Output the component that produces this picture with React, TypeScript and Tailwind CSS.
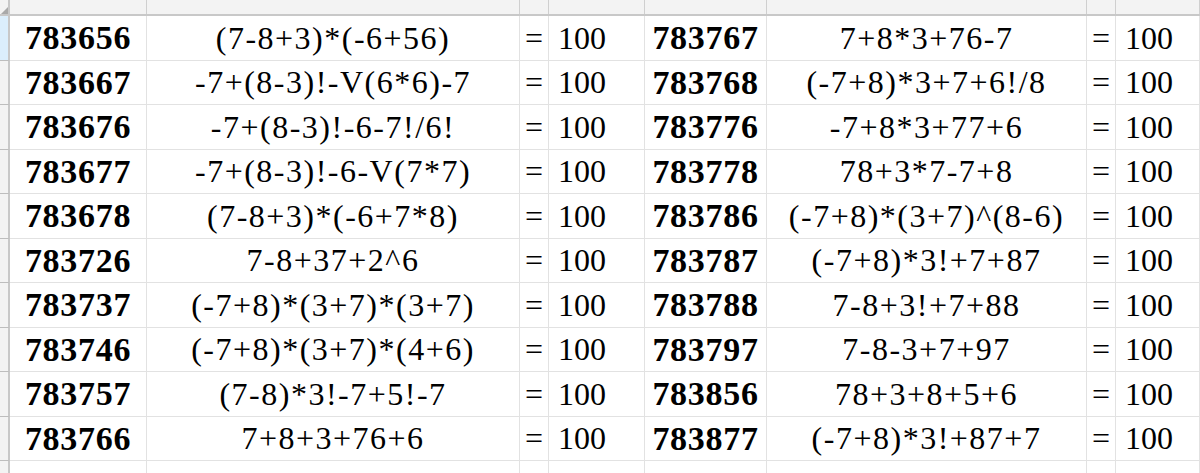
import React from "react";

const rows: [string, string, string, string][] = [
  ["783656", "(7-8+3)*(-6+56)", "783767", "7+8*3+76-7"],
  ["783667", "-7+(8-3)!-V(6*6)-7", "783768", "(-7+8)*3+7+6!/8"],
  ["783676", "-7+(8-3)!-6-7!/6!", "783776", "-7+8*3+77+6"],
  ["783677", "-7+(8-3)!-6-V(7*7)", "783778", "78+3*7-7+8"],
  ["783678", "(7-8+3)*(-6+7*8)", "783786", "(-7+8)*(3+7)^(8-6)"],
  ["783726", "7-8+37+2^6", "783787", "(-7+8)*3!+7+87"],
  ["783737", "(-7+8)*(3+7)*(3+7)", "783788", "7-8+3!+7+88"],
  ["783746", "(-7+8)*(3+7)*(4+6)", "783797", "7-8-3+7+97"],
  ["783757", "(7-8)*3!-7+5!-7", "783856", "78+3+8+5+6"],
  ["783766", "7+8+3+76+6", "783877", "(-7+8)*3!+87+7"],
];

const cols = "grid grid-cols-[10px_137px_373px_29px_96px_122px_320px_29px_1fr]";
const cell = "border-r border-b border-[#e2e2e2] flex items-center h-[44.5px] overflow-hidden whitespace-nowrap";
const bold = "font-bold text-[34px] tracking-[0.7px] justify-center";
const reg = "text-[32px] tracking-[1.5px] justify-center";

export default function App() {
  return (
    <div
      className="w-[1200px] h-[473px] overflow-hidden bg-white text-black"
      style={{ fontFamily: '"Liberation Serif", serif' }}
    >
      {/* column header strip */}
      <div className={`${cols} h-4 bg-[#f3f3f3] border-b-2 border-[#c8c8c8]`}>
        <div className="relative border-r-2 border-[#c8c8c8]">
          <div className="absolute right-0 bottom-0 w-0 h-0 border-l-[7px] border-l-transparent border-b-[7px] border-b-[#a9a9a9]" />
        </div>
        {Array.from({ length: 8 }).map((_, i) => (
          <div key={i} className="border-r border-[#cfcfcf]" />
        ))}
      </div>
      {rows.map((r, i) => (
        <div key={i} className={cols}>
          <div
            className={`h-[44.5px] border-r-2 border-r-[#c8c8c8] border-b border-b-[#bdbdbd] ${
              i === 0 ? "bg-[#dbeefc]" : "bg-[#f3f3f3]"
            }`}
          />
          <div className={`${cell} ${bold}`}>{r[0]}</div>
          <div className={`${cell} ${reg}`}>{r[1]}</div>
          <div className={`${cell} text-[32px] justify-center`}>=</div>
          <div className={`${cell} text-[32px] pl-[9px]`}>100</div>
          <div className={`${cell} ${bold}`}>{r[2]}</div>
          <div className={`${cell} ${reg}`}>{r[3]}</div>
          <div className={`${cell} text-[32px] justify-center`}>=</div>
          <div className={`${cell} text-[32px] pl-[9px]`}>100</div>
        </div>
      ))}
      <div className={cols}>
        <div className="h-[44.5px] border-r-2 border-r-[#c8c8c8] bg-[#f3f3f3]" />
        {Array.from({ length: 8 }).map((_, i) => (
          <div key={i} className="h-[44.5px] border-r border-[#e2e2e2]" />
        ))}
      </div>
    </div>
  );
}
